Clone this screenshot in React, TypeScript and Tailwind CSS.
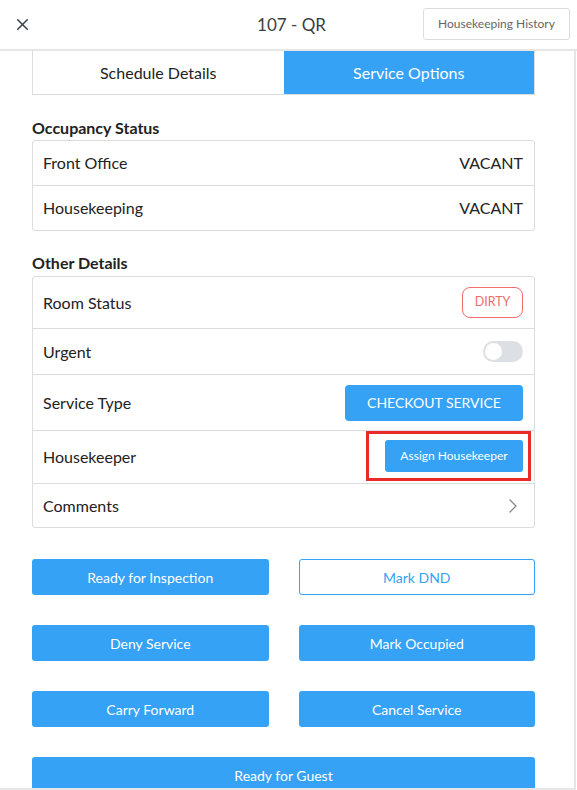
import { X, ChevronRight } from "lucide-react"

function Row({ label, children, h }: { label: string; children?: React.ReactNode; h: string }) {
  return (
    <div className={`flex items-center justify-between pl-[10px] pr-[11px] border-b border-[#dcdcdc] last:border-b-0 ${h}`}>
      <span className="text-[16px] text-[#222]">{label}</span>
      {children}
    </div>
  )
}

function ActionButton({ label, outline }: { label: string; outline?: boolean }) {
  return (
    <button
      type="button"
      className={
        outline
          ? "h-[36px] rounded-[3px] border border-[#35a2f5] bg-white text-[14px] text-[#35a2f5]"
          : "h-[36px] rounded-[3px] bg-[#35a2f5] text-[14px] text-white"
      }
    >
      {label}
    </button>
  )
}

export default function App() {
  return (
    <div className="w-[577px] h-[790px] overflow-hidden bg-white font-['Lato','Noto_Sans',sans-serif]">
      {/* Header */}
      <div className="h-[51px] flex items-center justify-between border-b-2 border-[#e6e6e6] pl-[13px] pr-[7px]">
        <X className="w-[19px] h-[19px] text-[#3d4650]" strokeWidth={2} />
        <span className="text-[17px] text-[#3a3f44] ml-[128px]">107 - QR</span>
        <button
          type="button"
          className="h-[32px] w-[147px] rounded-[3px] border border-[#dddddd] text-[12px] text-[#666] mb-[2px]"
        >
          Housekeeping History
        </button>
      </div>

      {/* Body */}
      <div className="w-[576px] h-[739px] border-r-2 border-b-2 border-[#e6e6e6] overflow-hidden pl-[32px]">
        <div className="w-[503px]">
          {/* Tabs */}
          <div className="flex h-[44px] border-l border-r border-b border-[#dcdcdc]">
            <div className="w-1/2 flex items-center justify-center text-[16px] text-[#222]">Schedule Details</div>
            <div className="w-1/2 flex items-center justify-center bg-[#35a2f5] text-[16px] text-white">Service Options</div>
          </div>

          {/* Occupancy */}
          <h3 className="mt-[23px] text-[16px] font-bold text-[#222] leading-[20px]">Occupancy Status</h3>
          <div className="mt-[2px] rounded-[3px] border border-[#dcdcdc]">
            <Row label="Front Office" h="h-[45px]">
              <span className="text-[16px] text-[#222]">VACANT</span>
            </Row>
            <Row label="Housekeeping" h="h-[44px]">
              <span className="text-[16px] text-[#222]">VACANT</span>
            </Row>
          </div>

          {/* Other Details */}
          <h3 className="mt-[22px] text-[16px] font-bold text-[#222] leading-[20px]">Other Details</h3>
          <div className="mt-[3px] rounded-[3px] border border-[#dcdcdc]">
            <Row label="Room Status" h="h-[52px]">
              <span className="h-[31px] w-[61px] flex items-center justify-center rounded-[8px] border border-[#f26c6c] text-[12.5px] text-[#f26c6c]">
                DIRTY
              </span>
            </Row>
            <Row label="Urgent" h="h-[46px]">
              <span className="w-[40px] h-[21px] rounded-full bg-[#dcdfe4] flex items-center pl-[2px]">
                <span className="w-[17px] h-[17px] rounded-full bg-white" />
              </span>
            </Row>
            <Row label="Service Type" h="h-[56px]">
              <button type="button" className="h-[36px] w-[178px] rounded-[4px] bg-[#35a2f5] text-[14px] text-white">
                CHECKOUT SERVICE
              </button>
            </Row>
            <div className="flex items-center justify-between pl-[10px] pr-[3px] h-[53px] border-b border-[#dcdcdc]">
              <span className="text-[16px] text-[#222]">Housekeeper</span>
              <div className="h-[50px] w-[165px] border-[3px] border-[#ea2b2b] flex items-center justify-end pr-[5px] mb-[2px]">
                <button type="button" className="h-[32px] w-[138px] rounded-[3px] bg-[#35a2f5] text-[12px] text-white">
                  Assign Housekeeper
                </button>
              </div>
            </div>
            <Row label="Comments" h="h-[43px]">
              <ChevronRight className="w-[24px] h-[24px] text-[#888] -mr-[2px]" strokeWidth={1.3} />
            </Row>
          </div>

          {/* Actions */}
          <div className="mt-[31px] grid grid-cols-2 gap-x-[30px] gap-y-[30px]">
            <ActionButton label="Ready for Inspection" />
            <ActionButton label="Mark DND" outline />
            <ActionButton label="Deny Service" />
            <ActionButton label="Mark Occupied" />
            <ActionButton label="Carry Forward" />
            <ActionButton label="Cancel Service" />
            <div className="col-span-2 h-[36px] rounded-[3px] bg-[#35a2f5] text-[14px] text-white flex items-center justify-center">
              Ready for Guest
            </div>
          </div>
        </div>
      </div>
    </div>
  )
}
